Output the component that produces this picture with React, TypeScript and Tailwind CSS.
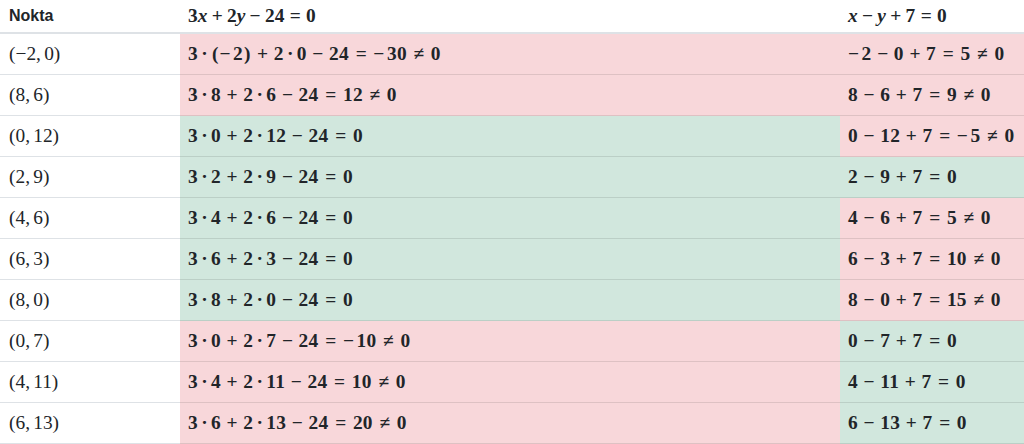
import type { ReactNode } from 'react'

type Row = { point: string; a: string; aOk: boolean; b: string; bOk: boolean }

const rows: Row[] = [
  { point: '(−2,0)', a: '3·(−2)+2·0−24=−30≠0', aOk: false, b: '−2−0+7=5≠0', bOk: false },
  { point: '(8,6)', a: '3·8+2·6−24=12≠0', aOk: false, b: '8−6+7=9≠0', bOk: false },
  { point: '(0,12)', a: '3·0+2·12−24=0', aOk: true, b: '0−12+7=−5≠0', bOk: false },
  { point: '(2,9)', a: '3·2+2·9−24=0', aOk: true, b: '2−9+7=0', bOk: true },
  { point: '(4,6)', a: '3·4+2·6−24=0', aOk: true, b: '4−6+7=5≠0', bOk: false },
  { point: '(6,3)', a: '3·6+2·3−24=0', aOk: true, b: '6−3+7=10≠0', bOk: false },
  { point: '(8,0)', a: '3·8+2·0−24=0', aOk: true, b: '8−0+7=15≠0', bOk: false },
  { point: '(0,7)', a: '3·0+2·7−24=−10≠0', aOk: false, b: '0−7+7=0', bOk: true },
  { point: '(4,11)', a: '3·4+2·11−24=10≠0', aOk: false, b: '4−11+7=0', bOk: true },
  { point: '(6,13)', a: '3·6+2·13−24=20≠0', aOk: false, b: '6−13+7=0', bOk: true },
]

// tiny KaTeX-like typesetter: spacing around operators and relations
function Math({ s, bold, wide }: { s: string; bold?: boolean; wide?: boolean }) {
  const out: ReactNode[] = []
  let prev = ''
  s.split('').forEach((ch, i) => {
    if (ch === '·') {
      out.push(<span key={i} className={wide ? 'mx-[0.17em]' : 'mx-[0.222em]'}>{ch}</span>)
    } else if (ch === '+') {
      out.push(<span key={i} className={wide ? 'mx-[0.29em]' : 'mx-[0.222em]'}>{ch}</span>)
    } else if (ch === '−') {
      const unary = prev === '' || prev === '(' || prev === '=' || prev === '≠' || prev === ','
      const cls = unary ? (wide ? 'pr-[0.13em]' : '') : wide ? 'mx-[0.29em]' : 'mx-[0.222em]'
      out.push(<span key={i} className={cls}>{ch}</span>)
    } else if (ch === '=' || ch === '≠') {
      out.push(<span key={i} className={wide ? 'mx-[0.345em]' : 'mx-[0.278em]'}>{ch}</span>)
    } else if (ch === ',') {
      out.push(<span key={i} className="mr-[0.167em]">{ch}</span>)
    } else if (ch === '(' || ch === ')') {
      out.push(<span key={i} className={wide ? 'px-[1px]' : ''}>{ch}</span>)
    } else if (ch === 'x' || ch === 'y') {
      out.push(<span key={i} className="italic">{ch}</span>)
    } else {
      out.push(<span key={i} className={wide ? 'tracking-[0.3px]' : ''}>{ch}</span>)
    }
    prev = ch
  })
  return (
    <span
      className={`whitespace-nowrap text-[19.36px] ${bold ? 'font-bold' : 'font-normal'}`}
      style={{ fontFamily: '"Liberation Serif", "DejaVu Serif", serif' }}
    >
      {out}
    </span>
  )
}

export default function App() {
  return (
    <div className="h-[444px] w-[1024px] overflow-hidden bg-white text-[#212529]">
      <table className="w-[1024px] table-fixed border-separate border-spacing-0">
        <colgroup>
          <col className="w-[180px]" />
          <col className="w-[660px]" />
          <col className="w-[184px]" />
        </colgroup>
        <thead>
          <tr className="h-[34px]">
            <th className="border-b-2 border-[#dee2e6] px-[9px] text-left align-middle font-['Liberation_Sans',Arial,sans-serif] text-base font-bold">
              Nokta
            </th>
            <th className="border-b-2 border-[#dee2e6] px-2 text-left align-middle">
              <Math s="3x+2y−24=0" bold />
            </th>
            <th className="border-b-2 border-[#dee2e6] px-2 text-left align-middle">
              <Math s="x−y+7=0" bold />
            </th>
          </tr>
        </thead>
        <tbody>
          {rows.map((r) => (
            <tr key={r.point} className="h-[41px]">
              <td className="border-b border-[#dee2e6] px-[9px] align-middle">
                <Math s={r.point} />
              </td>
              <td className={`border-b border-black/10 px-2 align-middle ${r.aOk ? 'bg-[#d1e7dd]' : 'bg-[#f8d7da]'}`}>
                <Math s={r.a} bold wide />
              </td>
              <td className={`border-b border-black/10 px-2 align-middle ${r.bOk ? 'bg-[#d1e7dd]' : 'bg-[#f8d7da]'}`}>
                <Math s={r.b} bold wide />
              </td>
            </tr>
          ))}
        </tbody>
      </table>
    </div>
  )
}
